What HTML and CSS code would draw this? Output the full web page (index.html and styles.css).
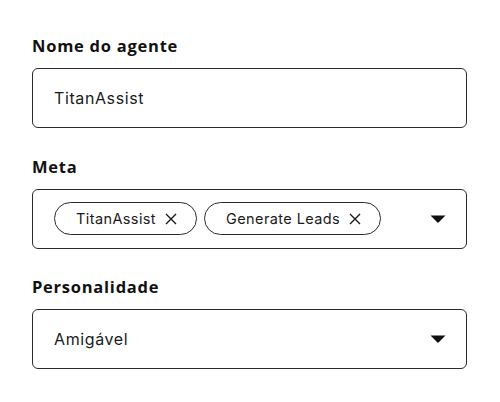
FILE: index.html
```html
<!DOCTYPE html>
<html lang="pt">
<head>
<meta charset="utf-8">
<link rel="stylesheet" href="styles.css">
</head>
<body>
<form class="form">
  <div class="field">
    <label class="label">Nome do agente</label>
    <div class="box"><span class="value">TitanAssist</span></div>
  </div>
  <div class="field">
    <label class="label">Meta</label>
    <div class="box box-select">
      <div class="chips">
        <span class="chip">TitanAssist <svg class="x" viewBox="0 0 12 12"><path d="M1 1L11 11M11 1L1 11"/></svg></span>
        <span class="chip">Generate Leads <svg class="x" viewBox="0 0 12 12"><path d="M1 1L11 11M11 1L1 11"/></svg></span>
      </div>
      <svg class="caret" viewBox="0 0 16 8"><path d="M0.5 0.5H15.5L8.8 7.3Q8 8 7.2 7.3Z"/></svg>
    </div>
  </div>
  <div class="field">
    <label class="label">Personalidade</label>
    <div class="box box-select">
      <span class="value">Amigável</span>
      <svg class="caret" viewBox="0 0 16 8"><path d="M0.5 0.5H15.5L8.8 7.3Q8 8 7.2 7.3Z"/></svg>
    </div>
  </div>
</form>
</body>
</html>
```
FILE: styles.css
```css
* { box-sizing: border-box; }
html, body { margin: 0; background: #fff; }
body {
  font-family: Inter, "Noto Sans", sans-serif;
  color: #1a1a1a;
}
.form {
  display: flex;
  flex-direction: column;
  gap: 28.5px;
  padding: 36px 33px 0 32px;
}
.field {
  display: flex;
  flex-direction: column;
  gap: 12px;
}
.label {
  font-family: "Open Sans", Inter, sans-serif;
  font-size: 16.5px;
  font-weight: 700;
  line-height: 20px;
  letter-spacing: 0.75px;
  color: #111;
}
.box {
  height: 60px;
  border: 1px solid #2a2a2a;
  border-radius: 6px;
  display: flex;
  align-items: center;
  padding: 0 20px 0 21px;
}
.box-select { justify-content: space-between; }
.value { font-size: 16px; letter-spacing: 0.6px; color: #1a1a1a; }
.chips { display: flex; gap: 7px; }
.chip {
  display: inline-flex;
  align-items: center;
  gap: 9px;
  height: 33px;
  padding: 0 19px 0 21px;
  border: 1px solid #2a2a2a;
  border-radius: 17px;
  font-size: 14.5px;
  letter-spacing: 0.4px;
  color: #1a1a1a;
}
.x { width: 12px; height: 12px; stroke: #1a1a1a; stroke-width: 1.4; fill: none; }
.caret { width: 16px; height: 8px; fill: #111; }
```
